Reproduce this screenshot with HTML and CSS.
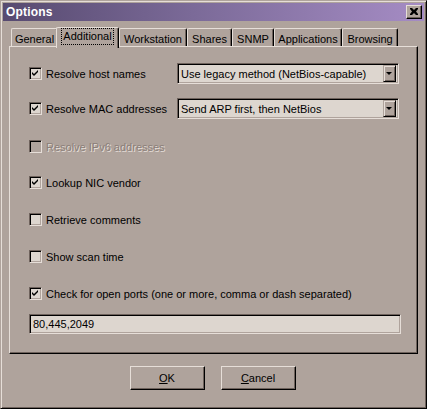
FILE: index.html
```html
<!DOCTYPE html>
<html>
<head>
<meta charset="utf-8">
<link rel="stylesheet" href="styles.css">
</head>
<body>
<div class="window">
  <div class="titlebar">
    <span class="title">Options</span>
    <span class="close"><svg width="8" height="7" viewBox="0 0 8 7"><path d="M0 0h2l2 2 2-2h2v1l-2 2.5 2 2.5v1h-2l-2-2-2 2h-2v-1l2-2.5-2-2.5z" fill="#000"/></svg></span>
  </div>
  <div class="tabs">
    <div class="tab t1">General</div>
    <div class="tab active t2"><span class="focus">Additional</span></div>
    <div class="tab t3">Workstation</div>
    <div class="tab t4">Shares</div>
    <div class="tab t5">SNMP</div>
    <div class="tab t6">Applications</div>
    <div class="tab t7">Browsing</div>
  </div>
  <div class="panel">
    <div class="row r1">
      <label class="check"><span class="box on"></span>Resolve host names</label>
      <div class="combo"><span class="value">Use legacy method (NetBios-capable)</span><span class="arrow"></span></div>
    </div>
    <div class="row r2">
      <label class="check"><span class="box on"></span>Resolve MAC addresses</label>
      <div class="combo"><span class="value">Send ARP first, then NetBios</span><span class="arrow"></span></div>
    </div>
    <div class="row r3">
      <label class="check disabled"><span class="box"></span>Resolve IPv6 addresses</label>
    </div>
    <div class="row r4">
      <label class="check"><span class="box on"></span>Lookup NIC vendor</label>
    </div>
    <div class="row r5">
      <label class="check"><span class="box"></span>Retrieve comments</label>
    </div>
    <div class="row r6">
      <label class="check"><span class="box"></span>Show scan time</label>
    </div>
    <div class="row r7">
      <label class="check"><span class="box on"></span>Check for open ports (one or more, comma or dash separated)</label>
    </div>
    <div class="field">80,445,2049</div>
  </div>
  <div class="buttons">
    <div class="btn"><u>O</u>K</div>
    <div class="btn"><u>C</u>ancel</div>
  </div>
</div>
</body>
</html>
```

FILE: styles.css
```css
* { box-sizing: border-box; }
html, body { margin: 0; padding: 0; background: #afa39c; }
body {
  font-family: "Liberation Sans", Arial, sans-serif;
  font-size: 11px;
  color: #000;
}
.window {
  width: 427px;
  height: 409px;
  background: #afa39c;
  border-top: 1px solid #afa39c;
  border-left: 1px solid #afa39c;
  border-right: 1px solid #000;
  border-bottom: 1px solid #000;
  box-shadow: inset 1px 1px 0 #e6ded8, inset -1px -1px 0 #6e625c;
  padding: 2px 2px 0 2px;
  display: flex;
  flex-direction: column;
}
.titlebar {
  height: 18px;
  background: linear-gradient(to right, #574a70, #7b6a98 45%, #a58cc4);
  display: flex;
  align-items: center;
  justify-content: space-between;
  padding: 0 2px 0 3px;
}
.title {
  color: #fff;
  font-weight: bold;
  font-size: 12px;
  letter-spacing: 0.2px;
}
.close {
  width: 16px;
  height: 14px;
  background: #afa39c;
  border-top: 1px solid #e6ded8;
  border-left: 1px solid #e6ded8;
  border-right: 1px solid #000;
  border-bottom: 1px solid #000;
  box-shadow: inset -1px -1px 0 #6e625c;
  display: flex;
  align-items: center;
  justify-content: center;
  padding: 0 1px 1px 0;
}
.tabs {
  display: flex;
  align-items: flex-end;
  height: 23px;
  margin-top: 3px;
  padding-left: 8px;
  position: relative;
  z-index: 1;
}
.tab {
  height: 18px;
  padding: 0 5px;
  display: flex;
  align-items: center;
  justify-content: center;
  border-top: 1px solid #e6ded8;
  border-left: 1px solid #e6ded8;
  border-right: 1px solid #000;
  border-radius: 2px 2px 0 0;
  box-shadow: inset -1px 0 0 #6e625c;
  margin-bottom: 1px;
  white-space: nowrap;
  padding-top: 2px;
}
.t1 { width: 47px; }
.t2 { width: 63px; }
.t3 { width: 68px; }
.t4 { width: 45px; }
.t5 { width: 42px; }
.t6 { width: 68px; }
.t7 { width: 56px; }
.tab.active {
  height: 21px;
  margin: 0 -1px -1px -2px;
  background: #afa39c;
  padding-top: 0;
  align-items: flex-start;
  padding-top: 1px;
}
.tab.active + .tab { margin-left: 1px; }
.focus {
  outline: 1px dotted #000;
  padding: 1px 1px 1px 1px;
  line-height: 13px;
}
.panel {
  margin: -1px 6px 0 6px;
  height: 308px;
  border-top: 1px solid #e6ded8;
  border-left: 1px solid #e6ded8;
  border-right: 1px solid #000;
  border-bottom: 1px solid #000;
  box-shadow: inset -1px -1px 0 #6e625c;
  padding: 16px 18px 0 19px;
  display: flex;
  flex-direction: column;
}
.row {
  height: 21px;
  display: flex;
  align-items: center;
  justify-content: space-between;
}
.r2 { margin-top: 14px; }
.r3 { margin-top: 17px; }
.r4 { margin-top: 15px; }
.r5 { margin-top: 16px; }
.r6 { margin-top: 16px; }
.r7 { margin-top: 16px; }
.check {
  display: flex;
  align-items: center;
  gap: 4px;
}
.check.disabled {
  color: #8b7f79;
  text-shadow: 1px 1px 0 #e6ded8;
}
.box {
  width: 13px;
  height: 13px;
  background: #ddd6cf;
  border-top: 1px solid #6e625c;
  border-left: 1px solid #6e625c;
  border-right: 1px solid #e6ded8;
  border-bottom: 1px solid #e6ded8;
  box-shadow: inset 1px 1px 0 #000, inset -1px -1px 0 #afa39c;
  position: relative;
}
.check.disabled .box { background: #afa39c; }
.box.on::after {
  content: "";
  position: absolute;
  left: 2px;
  top: 2px;
  width: 7px;
  height: 7px;
  background: no-repeat url("data:image/svg+xml;utf8,<svg xmlns='http://www.w3.org/2000/svg' width='7' height='7'><path d='M6 0v2L3 5 2 6 0 4V2l2 2 1-1z' fill='black'/></svg>");
}
.combo {
  width: 222px;
  height: 21px;
  background: #ddd6cf;
  border-top: 1px solid #6e625c;
  border-left: 1px solid #6e625c;
  border-right: 1px solid #e6ded8;
  border-bottom: 1px solid #e6ded8;
  box-shadow: inset 1px 1px 0 #000, inset -1px -1px 0 #afa39c;
  display: flex;
  align-items: center;
  justify-content: space-between;
  padding: 2px 2px 2px 3px;
}
.arrow {
  width: 13px;
  height: 17px;
  background: #afa39c;
  border-top: 1px solid #afa39c;
  border-left: 1px solid #afa39c;
  border-right: 1px solid #000;
  border-bottom: 1px solid #000;
  box-shadow: inset 1px 1px 0 #e6ded8, inset -1px -1px 0 #6e625c;
  position: relative;
  flex: none;
}
.arrow::after {
  content: "";
  position: absolute;
  left: 2px;
  top: 6px;
  border-left: 3px solid transparent;
  border-right: 3px solid transparent;
  border-top: 3px solid #000;
}
.field {
  margin-top: 10px;
  height: 20px;
  width: 372px;
  background: #ddd6cf;
  border-top: 1px solid #6e625c;
  border-left: 1px solid #6e625c;
  border-right: 1px solid #e6ded8;
  border-bottom: 1px solid #e6ded8;
  box-shadow: inset 1px 1px 0 #000, inset -1px -1px 0 #afa39c;
  padding: 0 3px;
  display: flex;
  align-items: center;
}
.buttons {
  display: flex;
  justify-content: center;
  gap: 16px;
  margin-top: 12px;
  padding-right: 2px;
}
.btn {
  width: 75px;
  height: 24px;
  background: #afa39c;
  border-top: 1px solid #e6ded8;
  border-left: 1px solid #e6ded8;
  border-right: 1px solid #000;
  border-bottom: 1px solid #000;
  box-shadow: inset -1px -1px 0 #6e625c;
  display: flex;
  align-items: center;
  justify-content: center;
}
```
